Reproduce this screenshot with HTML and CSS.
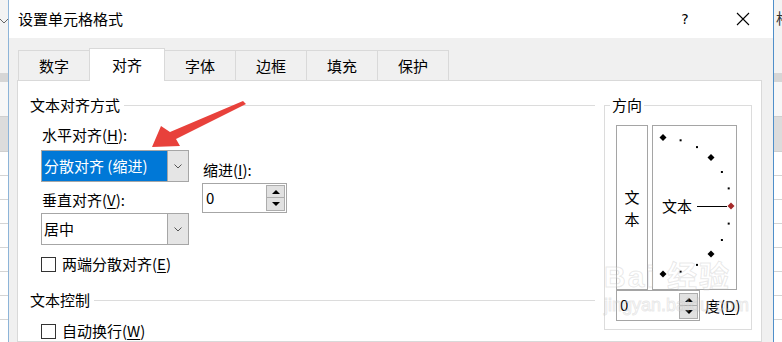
FILE: index.html
```html
<!DOCTYPE html>
<html lang="zh-CN">
  <head>
    <meta charset="UTF-8" />
    <title>设置单元格格式</title>
    <link rel="stylesheet" href="styles.css">
  </head>
  <body>
    <div class="screen">
      <div class="xl xl-left">
        <div class="xl-top">
          <svg class="xl-chev" width="8" height="6" viewBox="0 0 8 6"><polyline points="0,1 4,5 8,1" fill="none" stroke="#666" stroke-width="1"/></svg>
        </div>
        <div class="xl-band"></div>
        <div class="xl-cell"></div>
        <div class="xl-cell dark"></div>
        <div class="xl-row"></div>
        <div class="xl-row"></div>
        <div class="xl-row"></div>
        <div class="xl-row"></div>
        <div class="xl-row"></div>
        <div class="xl-row"></div>
        <div class="xl-row"></div>
        <div class="xl-row"></div>
      </div>

      <div class="dialog">
        <div class="titlebar">
          <span class="title">设置单元格格式</span>
          <span class="help">?</span>
          <span class="close">
            <svg width="14" height="14" viewBox="0 0 14 14"><path d="M1 1 L13 13 M13 1 L1 13" stroke="#000" stroke-width="1.1"/></svg>
          </span>
        </div>

        <div class="tabs">
          <div class="tab">数字</div>
          <div class="tab active">对齐</div>
          <div class="tab">字体</div>
          <div class="tab">边框</div>
          <div class="tab">填充</div>
          <div class="tab">保护</div>
        </div>

        <div class="panel">
          <div class="align-col">
            <div class="sec-head">文本对齐方式</div>
            <div class="sub">
              <div class="fields">
                <div class="field-col">
                  <div class="lbl">水平对齐(<u>H</u>):</div>
                  <div class="dropdown">
                    <span class="dd-value selected">分散对齐 (缩进)</span>
                    <span class="dd-btn"><svg width="8" height="5" viewBox="0 0 8 5"><polyline points="0.5,0.5 4,4 7.5,0.5" fill="none" stroke="#555"/></svg></span>
                  </div>
                  <div class="lbl lbl-v">垂直对齐(<u>V</u>):</div>
                  <div class="dropdown dd-v">
                    <span class="dd-value">居中</span>
                    <span class="dd-btn"><svg width="8" height="5" viewBox="0 0 8 5"><polyline points="0.5,0.5 4,4 7.5,0.5" fill="none" stroke="#555"/></svg></span>
                  </div>
                </div>
                <div class="indent-col">
                  <div class="lbl">缩进(<u>I</u>):</div>
                  <div class="spin">
                    <span class="spin-value">0</span>
                    <span class="spin-btns">
                      <span class="spin-btn"><span class="tri-up"></span></span>
                      <span class="spin-btn"><span class="tri-down"></span></span>
                    </span>
                  </div>
                </div>
              </div>
              <div class="check check-e"><span class="box"></span>两端分散对齐(<u>E</u>)</div>
            </div>
            <div class="sec-head ctrl">文本控制</div>
            <div class="sub">
              <div class="check check-w"><span class="box"></span>自动换行(<u>W</u>)</div>
            </div>
          </div>

          <div class="orient">
            <div class="orient-title">方向</div>
            <div class="orient-row">
              <div class="vtext"><span>文</span><span>本</span></div>
              <div class="dial">
                <svg width="83" height="163" viewBox="0 0 83 163">
                  <polygon points="10,8 13.5,11.5 10,15 6.5,11.5" fill="#000"/>
                  <rect x="26.6" y="13.3" width="2" height="2" fill="#000"/>
                  <rect x="43" y="20.1" width="2" height="2" fill="#000"/>
                  <polygon points="58,28 61.5,31.5 58,35 54.5,31.5" fill="#000"/>
                  <rect x="67.9" y="45" width="2" height="2" fill="#000"/>
                  <rect x="74.7" y="61.4" width="2" height="2" fill="#000"/>
                  <polygon points="78,76.5 81.5,80 78,83.5 74.5,80" fill="#a52a2a"/>
                  <rect x="74.7" y="96.6" width="2" height="2" fill="#000"/>
                  <rect x="67.9" y="113" width="2" height="2" fill="#000"/>
                  <polygon points="58,124.5 61.5,128 58,131.5 54.5,128" fill="#000"/>
                  <rect x="43" y="137.9" width="2" height="2" fill="#000"/>
                  <rect x="26.6" y="144.7" width="2" height="2" fill="#000"/>
                  <polygon points="10,144.5 13.5,148 10,151.5 6.5,148" fill="#000"/>
                  <text x="9" y="85.5" class="dial-text">文本</text>
                  <line x1="44" y1="80.5" x2="74" y2="80.5" stroke="#000" stroke-width="1"/>
                </svg>
              </div>
            </div>
            <div class="deg-row">
              <div class="spin deg-spin">
                <span class="spin-value">0</span>
                <span class="spin-btns deg-btns">
                  <span class="spin-btn"><span class="tri-up"></span></span>
                  <span class="spin-btn"><span class="tri-down"></span></span>
                </span>
              </div>
              <span class="deg-label">度(<u>D</u>)</span>
            </div>
          </div>
        </div>
      </div>

      <div class="xl xl-right">
        <div class="xl-top"><span class="xl-char">格</span></div>
        <div class="xl-band"></div>
        <div class="xl-cell"></div>
        <div class="xl-cell dark"></div>
        <div class="xl-row"></div>
        <div class="xl-row"></div>
        <div class="xl-row"></div>
        <div class="xl-row"></div>
        <div class="xl-row"></div>
        <div class="xl-row"></div>
        <div class="xl-row"></div>
        <div class="xl-row"></div>
      </div>

      <svg class="arrow" width="782" height="342" viewBox="0 0 782 342">
        <polygon points="152,147 161,126 170,132 243,101 246,104 176,139 180,146" fill="#e8413b"/>
      </svg>

      <div class="wm">
        <span class="wm-big">Bai 经验</span>
        <span class="wm-small">jingyan.baidu.com</span>
      </div>
    </div>
  </body>
</html>
```

FILE: styles.css
```css
body {
  margin: 0;
  font-family: "Noto Sans CJK SC", "Liberation Sans", sans-serif;
  font-size: 15px;
  color: #000;
}
u {
  text-decoration-thickness: 1px;
  text-underline-offset: 2px;
}
.screen {
  display: flex;
  height: 342px;
  overflow: hidden;
  position: relative;
}

/* excel behind the dialog */
.xl {
  display: flex;
  flex-direction: column;
  overflow: hidden;
  background: #fff;
}
.xl-left {
  width: 8px;
}
.xl-right {
  flex: 1;
}
.xl-top {
  height: 73px;
  flex-shrink: 0;
  background: #f3f3f3;
  position: relative;
}
.xl-chev {
  margin: 18px 0 0 0;
  display: block;
}
.xl-char {
  display: block;
  margin: 8px 0 0 2px;
  font-size: 15px;
  line-height: 20px;
  color: #333;
}
.xl-band {
  height: 9px;
  flex-shrink: 0;
  background: #d6d6d6;
}
.xl-cell {
  height: 34px;
  flex-shrink: 0;
  border-bottom: 1px solid #cfcfcf;
  background: #f7f7f7;
}
.xl-cell.dark {
  background: #dcdcdc;
}
.xl-row {
  height: 23px;
  flex-shrink: 0;
  border-bottom: 1px solid #d4d4d4;
}

/* dialog */
.dialog {
  width: 764px;
  flex-shrink: 0;
  display: flex;
  flex-direction: column;
  background: #f0f0f0;
  border-left: 1px solid #8db4d8;
  border-right: 1px solid #4f8fca;
}
.titlebar {
  height: 38px;
  flex-shrink: 0;
  display: flex;
  align-items: center;
  padding: 0 7px 0 9px;
  background: #fff;
}
.title {
  flex: 1;
  line-height: 20px;
}
.help,
.close {
  width: 46px;
  text-align: center;
  line-height: 20px;
}
.help {
  font-family: "DejaVu Sans", sans-serif;
  font-size: 14px;
  margin-right: 12px;
}
.close svg {
  display: block;
  margin: 0 auto;
}

.tabs {
  height: 42px;
  flex-shrink: 0;
  display: flex;
  align-items: flex-end;
  padding-left: 9px;
}
.tab {
  height: 30px;
  box-sizing: border-box;
  padding: 0 20px;
  margin-right: -1px;
  border: 1px solid #d9d9d9;
  border-bottom: none;
  line-height: 29px;
}
.tab.active {
  height: 33px;
  padding: 0 22px;
  margin-bottom: -1px;
  background: #fff;
  line-height: 31px;
  position: relative;
  z-index: 1;
}

.panel {
  flex: 1;
  display: flex;
  align-items: flex-start;
  margin: 0 11px 0 8px;
  padding: 14px 0 0 12px;
  background: #fff;
  border: 1px solid #d9d9d9;
}
.align-col {
  width: 565px;
}
.sec-head {
  display: flex;
  align-items: center;
  line-height: 20px;
}
.sec-head::after {
  content: "";
  flex: 1;
  height: 1px;
  margin-left: 4px;
  background: #dcdcdc;
}
.sec-head.ctrl {
  margin-top: 16px;
}
.sub {
  padding-left: 11px;
}
.fields {
  display: flex;
  margin-top: 10px;
}
.field-col {
  width: 148px;
}
.lbl {
  line-height: 20px;
  padding-left: 1px;
}
.lbl-v {
  margin-top: 8px;
}
.dropdown {
  margin-top: 5px;
  height: 32px;
  box-sizing: border-box;
  display: flex;
  border: 1px solid #a6a6a6;
}
.dd-v {
  margin-top: 3px;
}
.dd-value {
  flex: 1;
  line-height: 30px;
  padding-left: 2px;
}
.dd-value.selected {
  background: #0078d7;
  color: #fff;
}
.dd-btn {
  width: 20px;
  display: flex;
  align-items: center;
  justify-content: center;
  background: #e5e5e5;
  border-left: 1px solid #a6a6a6;
}

.indent-col {
  margin: 35px 0 0 13px;
}
.spin {
  margin-top: 3px;
  width: 85px;
  height: 30px;
  box-sizing: border-box;
  display: flex;
  border: 1px solid #a6a6a6;
  background: #fff;
}
.spin-value {
  flex: 1;
  line-height: 28px;
  padding-left: 3px;
}
.spin-btns {
  display: flex;
  flex-direction: column;
  padding: 1px 1px 1px 0;
}
.spin-btn {
  width: 19px;
  height: 13px;
  box-sizing: border-box;
  display: flex;
  align-items: center;
  justify-content: center;
  background: #e1e1e1;
  border: 1px solid #adadad;
}
.spin-btn + .spin-btn {
  border-top: none;
}
.tri-up {
  border-left: 4px solid transparent;
  border-right: 4px solid transparent;
  border-bottom: 4px solid #000;
}
.tri-down {
  border-left: 4px solid transparent;
  border-right: 4px solid transparent;
  border-top: 4px solid #000;
}

.check {
  display: flex;
  align-items: center;
  line-height: 20px;
}
.check-e {
  margin-top: 9px;
}
.check-w {
  margin-top: 11px;
}
.box {
  width: 15px;
  height: 15px;
  box-sizing: border-box;
  margin-right: 6px;
  border: 1px solid #333;
}

/* orientation */
.orient {
  width: 148px;
  box-sizing: border-box;
  margin: 10px 0 0 9px;
  padding: 0 0 8px 11px;
  border: 1px solid #dcdcdc;
}
.orient-title {
  width: fit-content;
  margin: -11px 0 0 -6px;
  padding: 0 2px;
  background: #fff;
  line-height: 20px;
}
.orient-row {
  display: flex;
  margin-top: 10px;
}
.vtext {
  width: 32px;
  height: 165px;
  box-sizing: border-box;
  display: flex;
  flex-direction: column;
  justify-content: center;
  align-items: center;
  border: 1px solid #a5a5a5;
  line-height: 22px;
}
.dial {
  width: 85px;
  height: 165px;
  box-sizing: border-box;
  margin-left: 4px;
  border: 1px solid #a5a5a5;
}
.dial svg {
  display: block;
}
.dial-text {
  font-family: "Noto Sans CJK SC", sans-serif;
  font-size: 15px;
}
.deg-row {
  display: flex;
  align-items: center;
}
.deg-spin {
  margin-top: 0;
  width: 84px;
  height: 31px;
  border-color: #a5a5a5;
}
.deg-btns {
  justify-content: flex-end;
}
.deg-label {
  margin-left: 5px;
  line-height: 20px;
}

/* overlays */
.arrow {
  position: absolute;
  left: 0;
  top: 0;
  pointer-events: none;
}
.wm {
  position: absolute;
  left: 604px;
  top: 260px;
  display: flex;
  flex-direction: column;
  pointer-events: none;
}
.wm-big {
  font-family: "Liberation Sans", "Noto Sans CJK SC", sans-serif;
  font-size: 30px;
  font-weight: bold;
  line-height: 34px;
  color: rgba(255, 255, 255, 0.2);
  -webkit-text-stroke: 1px rgba(180, 180, 180, 0.3);
  letter-spacing: 2px;
}
.wm-small {
  font-family: "Liberation Sans", sans-serif;
  font-size: 18px;
  line-height: 22px;
  color: rgba(255, 255, 255, 0.2);
  -webkit-text-stroke: 1px rgba(180, 180, 180, 0.3);
}
```
